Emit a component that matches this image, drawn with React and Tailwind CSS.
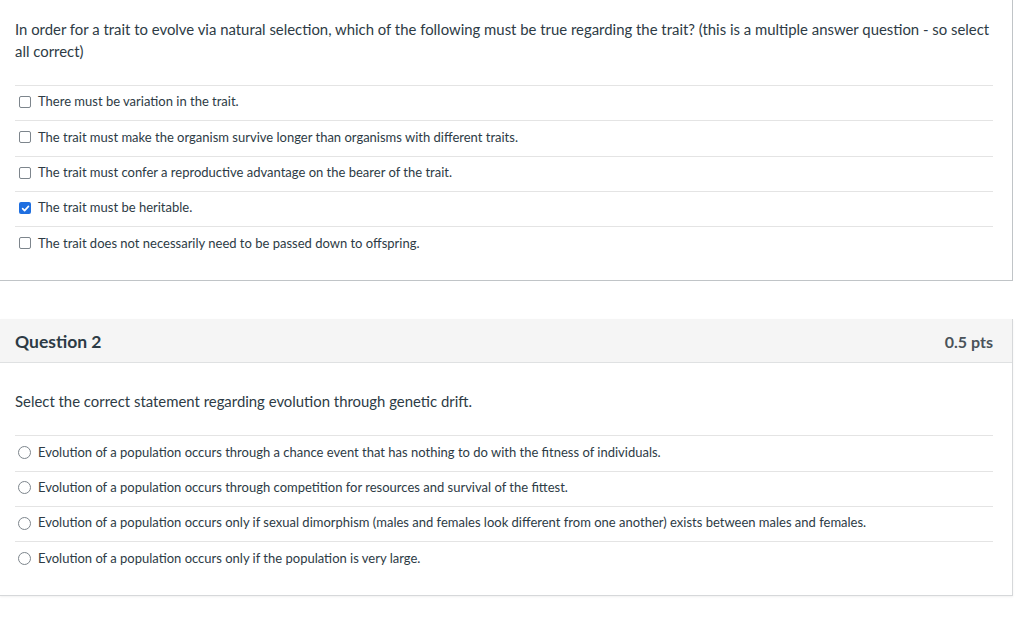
const q1Answers = [
  { text: 'There must be variation in the trait.', checked: false },
  { text: 'The trait must make the organism survive longer than organisms with different traits.', checked: false },
  { text: 'The trait must confer a reproductive advantage on the bearer of the trait.', checked: false },
  { text: 'The trait must be heritable.', checked: true },
  { text: 'The trait does not necessarily need to be passed down to offspring.', checked: false },
]

const q2Answers = [
  'Evolution of a population occurs through a chance event that has nothing to do with the fitness of individuals.',
  'Evolution of a population occurs through competition for resources and survival of the fittest.',
  'Evolution of a population occurs only if sexual dimorphism (males and females look different from one another) exists between males and females.',
  'Evolution of a population occurs only if the population is very large.',
]

function Checkbox({ checked }) {
  if (checked) {
    return (
      <span className="w-[12px] h-[12px] rounded-[2px] bg-[#1f6fe0] flex items-center justify-center shrink-0">
        <svg width="9" height="9" viewBox="0 0 10 10" fill="none">
          <path d="M1.8 5.2 L4 7.4 L8.3 2.6" stroke="#fff" strokeWidth="1.8" strokeLinecap="round" strokeLinejoin="round" />
        </svg>
      </span>
    )
  }
  return <span className="w-[12px] h-[12px] rounded-[2px] border border-[#7d858c] bg-white shrink-0" />
}

function Radio() {
  return <span className="w-[13px] h-[13px] -ml-px rounded-full border border-[#7d858c] bg-white shrink-0" />
}

function Row({ children, control }) {
  return (
    <div className="h-[35.3px] pb-[2px] flex items-center gap-[7px] pl-[4px] border-t border-[#e4e4e4]">
      {control}
      <span className="text-[13px] text-[#2d3b45]">{children}</span>
    </div>
  )
}

export default function App() {
  return (
    <div className="w-[1024px] h-[622px] bg-white overflow-hidden font-['Lato','Noto_Sans',sans-serif] text-[#2d3b45]">
      <div className="w-[1013px]">
        <div className="border-r border-b border-[#c0c4c7] pl-[15px] pr-[19px] pt-[18px] pb-[19px]">
          <p className="text-[14.9px] leading-[22px]">
            In order for a trait to evolve via natural selection, which of the following must be true regarding the trait? (this is a multiple answer question - so select all correct)
          </p>
          <div className="mt-[23px]">
            {q1Answers.map((a, i) => (
              <Row key={i} control={<Checkbox checked={a.checked} />}>
                {a.text}
              </Row>
            ))}
          </div>
        </div>

        <div className="mt-[38px] border-r border-b border-[#d6d8da] shadow-[0_1px_2px_rgba(0,0,0,0.06)]">
          <div className="h-[44px] pt-[3px] bg-[#f5f5f5] border-b border-[#dfe1e2] flex items-center justify-between pl-[15px] pr-[19px]">
            <h2 className="text-[17.5px] font-bold text-[#2d3b45]">Question 2</h2>
            <span className="text-[16px] font-bold text-[#4a5259]">0.5 pts</span>
          </div>
          <div className="pl-[15px] pr-[19px] pt-[27px] pb-[18px]">
            <p className="text-[14.9px] leading-[22px]">Select the correct statement regarding evolution through genetic drift.</p>
            <div className="mt-[23px]">
              {q2Answers.map((t, i) => (
                <Row key={i} control={<Radio />}>
                  {t}
                </Row>
              ))}
            </div>
          </div>
        </div>
      </div>
    </div>
  )
}
